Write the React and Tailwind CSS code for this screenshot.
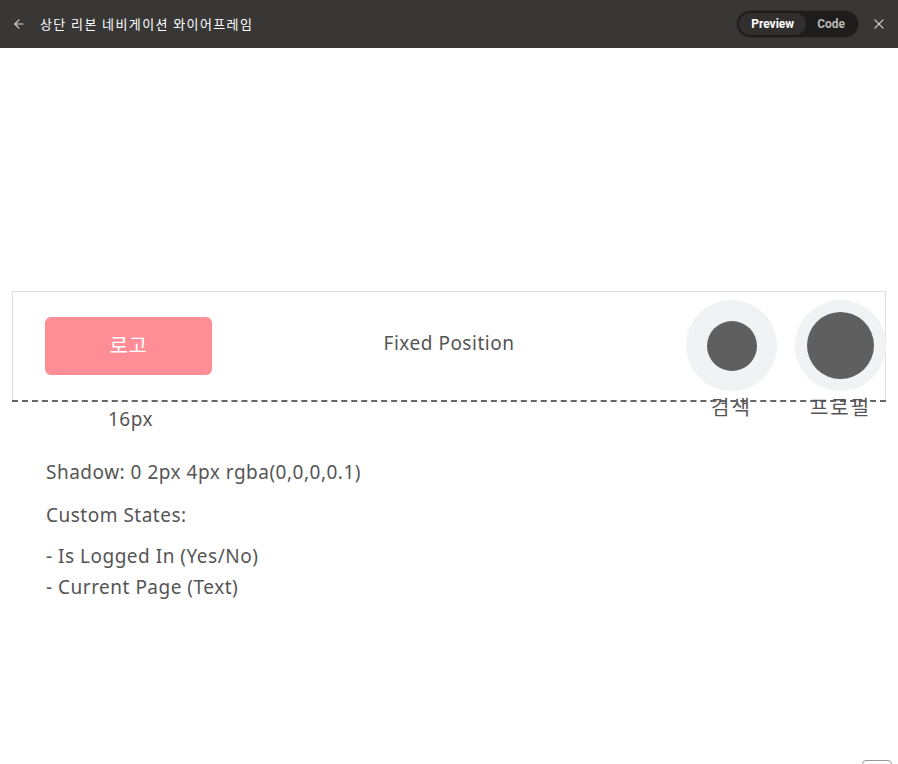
import React from 'react';

export default function App() {
  const font = { fontFamily: '"Noto Sans", "Noto Sans CJK KR", sans-serif' };
  return (
    <div className="w-[898px] h-[764px] bg-white relative overflow-hidden tracking-[0.5px]" style={font}>
      {/* top bar */}
      <div className="h-[48px] bg-[#383735] flex items-center pl-[12px] pr-[12px] tracking-normal">
        <svg width="14" height="14" viewBox="0 0 24 24" fill="none" stroke="#d6d6d6" strokeWidth="2" strokeLinecap="round" strokeLinejoin="round">
          <path d="M19 12H5" />
          <path d="M12 19l-7-7 7-7" />
        </svg>
        <span className="ml-[14px] text-[13px] text-white tracking-[1.4px]" style={{ fontFamily: '"Noto Sans CJK KR", sans-serif' }}>상단 리본 네비게이션 와이어프레임</span>
        <div className="ml-auto flex items-center h-[28px] rounded-full bg-[#1e1d1b] border border-[#2f2e2c] p-[2px]">
          <span className="h-full px-[12px] flex items-center rounded-full bg-[#302f2d] text-[12px] font-bold text-white" style={{ fontFamily: 'Roboto, sans-serif' }}>Preview</span>
          <span className="h-full px-[11px] flex items-center text-[12px] font-bold text-[#b9b8b4]" style={{ fontFamily: 'Roboto, sans-serif' }}>Code</span>
        </div>
        <svg className="ml-[13px]" width="14" height="14" viewBox="0 0 24 24" fill="none" stroke="#d6d6d6" strokeWidth="2" strokeLinecap="round">
          <path d="M5 5l14 14" />
          <path d="M19 5L5 19" />
        </svg>
      </div>

      {/* wireframe */}
      <div className="mt-[243px] mx-[12px] w-[874px]">
        <div className="h-[109px] border border-[#dedede] border-b-0 grid grid-cols-[1fr_auto_1fr] items-center px-[32px]">
          <div className="w-[167px] h-[58px] rounded-[6px] bg-[#ff8d96] flex items-center justify-center text-white text-[20px]">로고</div>
          <div className="text-center text-[19px] text-[#555] -mt-[6px]">Fixed Position</div>
          <div className="flex justify-end gap-[18px] -mr-[33px] self-start mt-[8px] h-[91px]">
            <div className="flex flex-col items-center">
              <div className="w-[91px] h-[91px] shrink-0 rounded-full bg-[#f1f2f4] flex items-center justify-center">
                <div className="w-[50px] h-[50px] rounded-full bg-[#5f5f5f]" />
              </div>
              <span className="text-[20px] text-[#555] leading-none mt-[7px] tracking-[2px]">검색</span>
            </div>
            <div className="flex flex-col items-center">
              <div className="w-[91px] h-[91px] shrink-0 rounded-full bg-[#f1f2f4] flex items-center justify-center">
                <div className="w-[67px] h-[67px] rounded-full bg-[#5f5f5f]" />
              </div>
              <span className="text-[20px] text-[#555] leading-none mt-[7px] tracking-[2px]">프로필</span>
            </div>
          </div>
        </div>
        <div className="border-t-2 border-dashed border-[#666]" />
        <div className="pl-[96px] mt-[4px] text-[19px] text-[#555] leading-[26px]">16px</div>
      </div>

      <div className="pl-[46px] mt-[25px] text-[19px] text-[#555] leading-[31px]">
        <p>Shadow: 0 2px 4px rgba(0,0,0,0.1)</p>
        <p className="mt-[12px]">Custom States:</p>
        <p className="mt-[10px]">- Is Logged In (Yes/No)</p>
        <p>- Current Page (Text)</p>
      </div>

      <div className="absolute left-[862px] top-[760px] w-[30px] h-[20px] rounded-[4px] border border-[#999]" />
    </div>
  );
}
